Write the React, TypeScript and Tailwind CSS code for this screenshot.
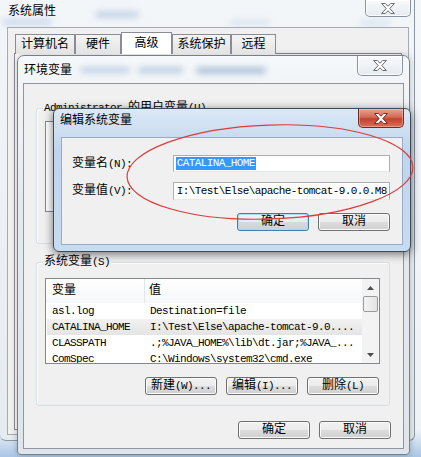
import React from "react";

// half-width latin run, SimSun-like 6px advance
function L({ children }: { children: React.ReactNode }) {
  return <span className="text-[11px] tracking-[-0.6px]">{children}</span>;
}

function XGlyph({ red = false }: { red?: boolean }) {
  return (
    <svg width="14" height="11" viewBox="-0.5 -0.5 15 12">
      <polygon
        points="0,0 4,0 7,3 10,0 14,0 9,5.5 14,11 10,11 7,8 4,11 0,11 5,5.5"
        fill="#ffffff"
        stroke={red ? "#6b1e14" : "#555b62"}
        strokeWidth="1"
        strokeLinejoin="round"
      />
    </svg>
  );
}

function CloseBtn({ className }: { className: string }) {
  return (
    <div
      className={
        "absolute flex items-center justify-center rounded-b-[5px] border border-t-0 border-[#8a949e] bg-[linear-gradient(#f8fafc,#e6ebf0)] shadow-[inset_0_0_0_1px_rgba(255,255,255,0.85)] " +
        className
      }
    >
      <XGlyph />
    </div>
  );
}

function Btn({ children, focus = false }: { children: React.ReactNode; focus?: boolean }) {
  return (
    <div
      className={clsxLite(
        "flex h-[18px] w-[72px] items-center justify-center rounded-[3px] border leading-[14px]",
        focus
          ? "border-[#3c7fb1] bg-[linear-gradient(#eef3f7_0%,#e6ebf0_48%,#d5dbe2_52%,#c9d0d8_100%)] shadow-[inset_0_0_0_1px_#a9dcf7]"
          : "border-[#707070] bg-[linear-gradient(#f2f2f2_0%,#ebebeb_48%,#dddddd_52%,#cfcfcf_100%)] shadow-[inset_0_0_0_1px_#fbfbfb]"
      )}
    >
      {children}
    </div>
  );
}

function clsxLite(...c: string[]) {
  return c.join(" ");
}

function Tab({ label, w, active = false }: { label: string; w: string; active?: boolean }) {
  return (
    <div
      className={clsxLite(
        "relative z-10 flex items-center justify-center border border-b-0 border-[#898c95] leading-[14px]",
        w,
        active ? "h-[22px] bg-white" : "h-[20px] bg-[linear-gradient(#f4f4f4,#e3e3e3)]"
      )}
    >
      {label}
    </div>
  );
}

const rows = [
  ["asl.log", "Destination=file"],
  ["CATALINA_HOME", "I:\\Test\\Else\\apache-tomcat-9.0...."],
  ["CLASSPATH", ".;%JAVA_HOME%\\lib\\dt.jar;%JAVA_..."],
  ["ComSpec", "C:\\Windows\\system32\\cmd.exe"],
];

export default function App() {
  return (
    <div className="relative h-[457px] w-[421px] overflow-hidden bg-[linear-gradient(180deg,#f4f7fa_0%,#eef3f8_94%,#a9c6e6_100%)] font-['Liberation_Mono','Noto_Sans_CJK_SC',monospace] text-[12px] text-black">
      {/* 系统属性 */}
      <div className="absolute left-0 top-0 h-[441px] w-[415px] rounded-b-[6px] border-b border-r border-[#8b96a2] bg-[linear-gradient(180deg,#f3f6f9,#e6ebf0)]">
        <div className="absolute left-[2px] top-[19px] h-[6px] w-[50px] rounded-full bg-[#b9cde4] opacity-70 blur-[3px]" />
        <div className="absolute left-[95px] top-[11px] h-[7px] w-[44px] rounded-full bg-[#a5bedb] opacity-60 blur-[3px]" />
        <div className="absolute left-[230px] top-[20px] h-[5px] w-[40px] rounded-full bg-[#c2d3e6] opacity-60 blur-[3px]" />
        <div className="absolute left-[360px] top-[20px] h-[6px] w-[30px] rounded-full bg-[#c9d9ea] opacity-60 blur-[3px]" />
        <div className="absolute left-[8px] top-[5px] leading-[14px]">系统属性</div>
        <CloseBtn className="left-[365px] top-0 h-[17px] w-[46px]" />
        <div className="absolute left-[7px] top-[27px] h-[408px] w-[402px] border border-[#a3acb6] bg-[#f0f0f0]">
          <div className="flex h-[26px] items-end pl-[7px]">
            <Tab label="计算机名" w="w-[60px]" />
            <Tab label="硬件" w="w-[46px]" />
            <Tab label="高级" w="w-[51px]" active />
            <Tab label="系统保护" w="w-[59px]" />
            <Tab label="远程" w="w-[45px]" />
          </div>
          <div className="-mt-px ml-[6px] h-[377px] w-[388px] border border-[#898c95] bg-[#fbfbfb]" />
        </div>
      </div>

      {/* 环境变量 */}
      <div className="absolute left-[17px] top-[55px] h-[400px] w-[393px] rounded-b-[4px] rounded-t-[7px] border border-[#76818d] bg-[linear-gradient(180deg,#f5f8fa,#e5eaef_35%,#dfe5eb)] shadow-[0_0_6px_rgba(0,0,0,0.25)]">
        <div className="absolute left-[62px] top-[11px] h-[6px] w-[50px] rounded-full bg-[#9db7d9] opacity-60 blur-[3px]" />
        <div className="absolute left-[120px] top-[11px] h-[6px] w-[45px] rounded-full bg-[#7f9fc8] opacity-50 blur-[3px]" />
        <div className="absolute left-[178px] top-[11px] h-[7px] w-[70px] rounded-full bg-[#6f8fbb] opacity-50 blur-[3px]" />
        <div className="absolute left-[6px] top-[8px] leading-[14px]">环境变量</div>
        <CloseBtn className="right-[6px] top-0 h-[20px] w-[46px]" />
        <div className="absolute left-[5px] top-[27px] h-[366px] w-[381px] border border-[#8c97a3] bg-[#f0f0f0]">
          {/* user variables */}
          <div className="relative ml-[12px] mt-[24px] h-[136px] w-[354px] rounded-[3px] border border-[#d5dfe5] shadow-[inset_1px_1px_0_#ffffff]">
            <div className="absolute -top-[8px] left-[6px] bg-[#f0f0f0] px-px leading-[14px]">
              <L>Administrator </L>的用户变量<L>(U)</L>
            </div>
            <div className="ml-[8px] mt-[12px] h-[91px] w-[335px] border border-[#828790] bg-white" />
          </div>

          {/* system variables */}
          <div className="relative ml-[12px] mt-[18px] h-[144px] w-[354px] rounded-[3px] border border-[#d5dfe5] shadow-[inset_1px_1px_0_#ffffff]">
            <div className="absolute -top-[8px] left-[6px] bg-[#f0f0f0] px-px leading-[14px]">
              系统变量<L>(S)</L>
            </div>
            <div className="ml-[8px] mt-[15px] flex h-[86px] w-[335px] overflow-hidden border border-[#828790] bg-white">
              <div className="w-[317px]">
                <div className="flex h-[24px] items-center bg-[linear-gradient(#ffffff,#f6f7f9)]">
                  <div className="flex h-full w-[99px] items-center border-r border-[#e3e6ea] pl-[6px] leading-[14px]">变量</div>
                  <div className="pl-[4px] leading-[14px]">值</div>
                </div>
                {rows.map(([k, v], i) => (
                  <div
                    key={k}
                    className={clsxLite(
                      "ml-px flex h-[16px] w-[315px] items-center leading-[14px]",
                      i === 1 ? "bg-[linear-gradient(#f2f2f2,#e4e4e4)]" : ""
                    )}
                  >
                    <div className="w-[98px] pl-[5px]">
                      <L>{k}</L>
                    </div>
                    <div className="pl-[5px]">
                      <L>{v}</L>
                    </div>
                  </div>
                ))}
              </div>
              <div className="flex w-[17px] flex-col bg-[#f3f3f3]">
                <div className="flex h-[17px] items-center justify-center">
                  <svg width="7" height="4" viewBox="0 0 7 4">
                    <polygon points="3.5,0 7,4 0,4" fill="#4d4d4d" />
                  </svg>
                </div>
                <div className="mx-px h-[16px] rounded-[2px] border border-[#9a9a9a] bg-[linear-gradient(90deg,#f4f4f4,#e2e2e2)]" />
                <div className="flex-1" />
                <div className="flex h-[17px] items-center justify-center">
                  <svg width="7" height="4" viewBox="0 0 7 4">
                    <polygon points="0,0 7,0 3.5,4" fill="#4d4d4d" />
                  </svg>
                </div>
              </div>
            </div>
            <div className="ml-[8px] mt-[13px] flex w-[335px] justify-end gap-[9px] pr-px">
              <Btn>新建<L>(W)...</L></Btn>
              <Btn>编辑<L>(I)...</L></Btn>
              <Btn>删除<L>(L)</L></Btn>
            </div>
          </div>

          <div className="mt-[15px] flex justify-end gap-[9px] pr-[12px]">
            <Btn>确定</Btn>
            <Btn>取消</Btn>
          </div>
        </div>
      </div>

      {/* 编辑系统变量 */}
      <div className="absolute left-[53px] top-[108px] h-[144px] w-[358px] rounded-[6px] border border-[#3d4b5a] bg-[linear-gradient(180deg,#dce9f6,#bfd5ec_30%,#c8dcf0)] shadow-[0_2px_10px_rgba(0,0,0,0.55)]">
        <div className="absolute left-[6px] top-[5px] leading-[14px]">编辑系统变量</div>
        <div className="absolute right-[6px] top-0 flex h-[19px] w-[46px] items-center justify-center rounded-b-[5px] border border-t-0 border-[#6e2b22] bg-[linear-gradient(#e9a493_0%,#d26a55_45%,#c2412c_55%,#d8705a_100%)] shadow-[inset_0_0_0_1px_rgba(255,200,190,0.5)]">
          <XGlyph red />
        </div>
        <div className="absolute left-[7px] top-[28px] h-[108px] w-[342px] border border-[#97acc4] bg-[#f0f0f0] pl-[10px] pr-[12px] pt-[17px]">
          <div className="flex h-[17px] items-center">
            <div className="w-[101px] leading-[14px]">
              变量名<L>(N):</L>
            </div>
            <div className="flex h-[17px] w-[218px] items-center border border-[#abadb3] border-b-[#e3e9ef] bg-white pl-[2px]">
              <span className="bg-[#3399ff] px-px leading-[13px] text-white">
                <L>CATALINA_HOME</L>
              </span>
            </div>
          </div>
          <div className="mt-[10px] flex h-[18px] items-center">
            <div className="w-[101px] leading-[14px]">
              变量值<L>(V):</L>
            </div>
            <div className="flex h-[18px] w-[218px] items-center overflow-hidden whitespace-nowrap border border-[#abadb3] border-b-[#e3e9ef] bg-white pl-[3px]">
              <L>{"I:\\Test\\Else\\apache-tomcat-9.0.0.M8"}</L>
            </div>
          </div>
          <div className="mt-[13px] flex justify-end gap-[9px]">
            <Btn focus>确定</Btn>
            <Btn>取消</Btn>
          </div>
        </div>
      </div>

      {/* red annotation ellipse */}
      <svg className="pointer-events-none absolute left-0 top-0" width="421" height="457">
        <ellipse
          cx="270"
          cy="172"
          rx="143"
          ry="47"
          fill="none"
          stroke="#dd3b3b"
          strokeWidth="1.2"
          transform="rotate(-2 270 172)"
        />
      </svg>
    </div>
  );
}
